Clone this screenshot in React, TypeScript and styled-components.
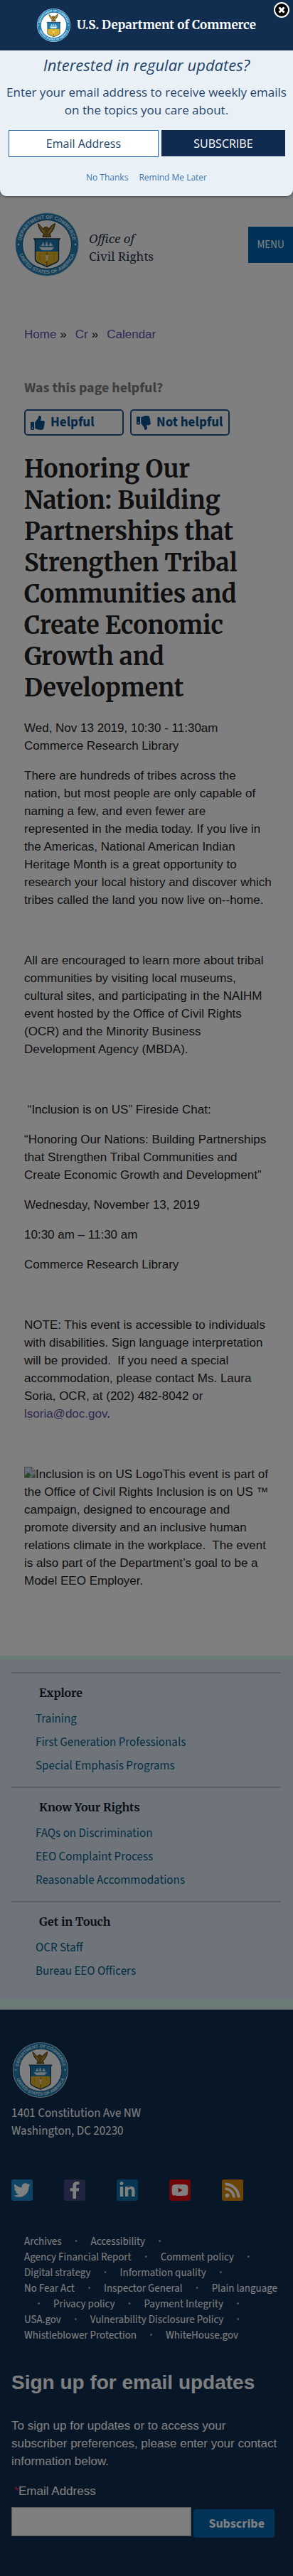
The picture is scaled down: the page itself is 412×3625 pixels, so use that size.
import React from "react";
import styled, { createGlobalStyle } from "styled-components";
import {
  FaFacebookF,
  FaLinkedinIn,
  FaRss,
  FaThumbsDown,
  FaThumbsUp,
  FaTwitter,
  FaYoutube,
} from "react-icons/fa";

const serif = `Merriweather, "Noto Serif", "DejaVu Serif Condensed", serif`;
const officeSerif = `"Noto Serif", "DejaVu Serif Condensed", serif`;
const sourceSans = `"Source Sans 3", "Noto Sans", sans-serif`;
const openSans = `"Open Sans", "Noto Sans", sans-serif`;
const body = `"Liberation Sans", Arial, sans-serif`;
const navy = "#112e51";

const GlobalStyle = createGlobalStyle`
  *, *::before, *::after { box-sizing: border-box; }
  body { margin: 0; background: #fff; }
  h1, h2, h3, p, ul, address { margin: 0; padding: 0; }
  ul { list-style: none; }
  a { text-decoration: none; }
`;

const Page = styled.div`
  position: relative;
  font-family: ${body};
  font-size: 17px;
  line-height: 25px;
  color: #212121;
`;

/* ---------- seal ---------- */

const SealSvg = styled.svg<{ $size: number }>`
  display: block;
  flex: none;
  width: ${(p) => p.$size}px;
  height: ${(p) => p.$size}px;
`;

const Seal = ({ size, id }: { size: number; id: string }) => (
  <SealSvg $size={size} viewBox="0 0 90 90" role="img" aria-label="Department of Commerce seal">
    <defs>
      <path id={`${id}-top`} d="M8.5 45a36.5 36.5 0 0 1 73 0" />
      <path id={`${id}-bottom`} d="M3.8 45a41.2 41.2 0 0 0 82.4 0" />
    </defs>
    <circle cx="45" cy="45" r="45" fill="#d7e7f2" />
    <circle cx="45" cy="45" r="44" fill="#2480b4" />
    <circle cx="45" cy="45" r="34.5" fill="#fff" stroke="#174f7c" strokeWidth="1" />
    <g fill="#d5efff" fontFamily={body} fontWeight="700" fontSize="7">
      <text textAnchor="middle">
        <textPath href={`#${id}-top`} startOffset="50%">DEPARTMENT OF COMMERCE</textPath>
      </text>
      <text textAnchor="middle">
        <textPath href={`#${id}-bottom`} startOffset="50%">UNITED STATES OF AMERICA</textPath>
      </text>
    </g>
    <circle cx="5" cy="45" r="1.2" fill="#fff" />
    <circle cx="85" cy="45" r="1.2" fill="#fff" />
    <path
      d="M32 15.5c3 2 5.500 4.500 7.500 8 1-2.500 2.500-3.500 5-3 2 .3 3 1.500 3.500 3 1.500-3.500 4-6 8.500-8-1 6-3 11-7.500 14.500l1.500 4.500H39l1.500-4.500C36 27 33.500 22 32 15.500z"
      fill="#8c6a24"
      stroke="#46340f"
      strokeWidth="1"
    />
    <path d="M35 19l6.500 9M54 19l-6.500 9M37.500 24l5 6M51.500 24l-5 6" stroke="#d8b556" strokeWidth="1" />
    <path d="M27 37h36l-1.500 3V66c0 5-9 6-16.500 10.500C37.500 72 28.500 71 28.500 66V40z" fill="#e0b52c" />
    <path d="M27 37h36l-1.500 3v15h-33V40z" fill="#1f7bb0" />
    <path d="M27 37h36l-1.500 3V66c0 5-9 6-16.500 10.500C37.500 72 28.500 71 28.500 66V40z" fill="none" stroke="#173a5c" strokeWidth="1.500" />
    <path d="M34 49h21l-3.500 4H38zM37 47l3-5 1 5M42.500 47l2-6 2 6M48 47l2-5 3 5" fill="#e4f1f8" stroke="#b7d5e6" strokeWidth=".7" />
    <path d="M45 56v19" stroke="#9a6f12" strokeWidth="1.500" />
    <path d="M35 57v11M55 57v11" stroke="#c4951b" strokeWidth="1" />
    <path d="M43 60h4l-1 8h-2z" fill="#efe3b4" />
  </SealSvg>
);

/* ---------- site header ---------- */

const SiteHeader = styled.header`
  display: flex;
  align-items: center;
  padding: 299px 0 0 21px;
`;

const OfficeName = styled.a`
  flex: 1;
  margin-left: 14px;
  padding-top: 8px;
  font-family: ${officeSerif};
  font-size: 17px;
  line-height: 25px;
  color: #27304a;

  em,
  span {
    display: block;
  }
`;

const MenuButton = styled.button`
  width: 63px;
  height: 51px;
  padding: 0;
  border: 0;
  background: #0062ae;
  color: #fff;
  font-family: ${sourceSans};
  font-size: 15px;
`;

/* ---------- article ---------- */

const Main = styled.main`
  padding: 69px 29px 93px 34px;
`;

const Crumbs = styled.nav`
  display: flex;
  gap: 12px;

  span {
    display: flex;
    gap: 5px;
  }
`;

const TextLink = styled.a`
  color: #6650a8;
`;

const Question = styled.p`
  margin-top: 51px;
  font-family: ${sourceSans};
  font-size: 20px;
  font-weight: 700;
  line-height: 24px;
  color: #7c7c7c;
`;

const Votes = styled.div`
  display: flex;
  gap: 9px;
  margin-top: 18px;
`;

const VoteButton = styled.button`
  display: flex;
  align-items: center;
  gap: 8px;
  min-width: 140px;
  height: 37px;
  padding: 0 8px 0 7px;
  border: 2px solid #205493;
  border-radius: 5px;
  background: transparent;
  color: #08508c;
  font-family: ${sourceSans};
  font-size: 19px;
  font-weight: 700;
  line-height: 24px;

  svg {
    width: 20px;
    height: 20px;
  }
`;

const Title = styled.h1`
  margin: 25px 0 22px;
  font-family: ${serif};
  font-size: 34px;
  font-weight: 700;
  line-height: 44px;
`;

const Group = styled.div`
  display: flex;
  flex-direction: column;
  gap: 17px;

  & + & {
    margin-top: 60px;
  }

  &:first-of-type {
    margin-top: 17px;
  }
`;

const BrokenImage = styled.svg`
  width: 16px;
  height: 16px;
  vertical-align: baseline;
`;

/* ---------- section navigation ---------- */

const Related = styled.aside`
  padding: 18px 17px 11px 16px;
  border-top: 5px solid #d6f6ec;
  border-bottom: 9px solid #d6f6ec;
  background: #dfe8f6;
`;

const RelatedEdge = styled.div`
  height: 5px;
  background: #dcebf2;
`;

const RelatedSection = styled.section`
  padding: 14px 0 12px 34px;
  border-top: 2px solid #b9c0cc;
`;

const RelatedHeading = styled.h3`
  margin: 0 0 8px 5px;
  font-family: ${serif};
  font-size: 16px;
  line-height: 26px;
  color: #121b2e;
`;

const RelatedLink = styled.a`
  display: block;
  font-family: ${sourceSans};
  font-size: 17px;
  line-height: 33px;
  color: #045f85;
`;

/* ---------- footer ---------- */

const Footer = styled.footer`
  padding: 46px 16px 54px;
  background: ${navy};
  color: #fff;
`;

const FooterSeal = styled.div`
  padding-left: 2px;
`;

const Address = styled.address`
  margin-top: 10px;
  font-family: ${sourceSans};
  font-size: 17px;
  font-style: normal;
`;

const Social = styled.div`
  display: flex;
  gap: 44px;
  margin-top: 55px;
`;

const SocialLink = styled.a<{ $bg: string }>`
  display: flex;
  align-items: center;
  justify-content: center;
  width: 30px;
  height: 30px;
  border-radius: 3px;
  background: ${(p) => p.$bg};
  color: #fff;

  svg {
    width: 24px;
    height: 24px;
  }
`;

const FooterLinks = styled.div`
  display: flex;
  flex-wrap: wrap;
  margin: 47px 2px 0 18px;
  font-family: ${sourceSans};
  font-size: 15px;
  line-height: 22px;
  white-space: nowrap;

  a {
    color: #fff;
  }
`;

const Dot = styled.span`
  width: 41px;
  text-align: center;
  color: #a5b4c8;
  font-weight: 700;

  &::before {
    content: "·";
  }
`;

const SignupHeading = styled.h2`
  margin: 37px 0 30px;
  font-size: 28px;
  line-height: 36px;
`;

const SignupLabel = styled.label`
  display: block;
  margin-top: 17px;
`;

const Star = styled.span`
  display: inline-block;
  width: 10px;
  color: #e0205c;
  text-align: right;
`;

const SignupRow = styled.div`
  display: flex;
  gap: 3px;
  margin-top: 10px;
  padding-right: 10px;
`;

const SignupInput = styled.input`
  flex: 1;
  min-width: 0;
  height: 41px;
  padding: 0 10px;
  border: 1px solid #aeb0b5;
  background: #fff;
  font-size: 17px;
`;

const SignupButton = styled.button`
  height: 40px;
  margin-top: 3px;
  padding: 0 14px 0 21px;
  border: 0;
  border-radius: 3px;
  background: #0066ad;
  color: #fff;
  font-family: ${sourceSans};
  font-size: 18px;
  font-weight: 700;
`;

/* ---------- subscription dialog ---------- */

const Overlay = styled.div`
  position: absolute;
  inset: 0;
  background: rgba(0, 0, 0, 0.5);
`;

const Dialog = styled.div`
  overflow: hidden;
  padding-bottom: 14px;
  border-radius: 0 0 9px 9px;
  background: #e9f1f7;
  box-shadow: 0 0 5px rgba(0, 0, 0, 0.6);
  font-family: ${openSans};
  text-align: center;
  color: #1f4469;
`;

const DialogBanner = styled.div`
  display: flex;
  align-items: center;
  justify-content: center;
  gap: 9px;
  height: 71px;
  background: ${navy};
  color: #fff;
  font-family: ${serif};
  font-size: 17px;
  font-weight: 700;
`;

const DialogTitle = styled.h2`
  padding-top: 4px;
  font-size: 22px;
  font-style: italic;
  font-weight: 400;
  line-height: 32px;
`;

const DialogText = styled.p`
  margin: 10px 4px 0;
`;

const DialogForm = styled.form`
  display: flex;
  gap: 4px;
  margin: 16px 11px 0 12px;
`;

const DialogInput = styled.input`
  flex: 6;
  min-width: 0;
  height: 38px;
  padding: 0;
  border: 1px solid #2e6da4;
  background: #fff;
  font-family: ${openSans};
  font-size: 16px;
  text-align: center;

  &::placeholder {
    color: #1f4469;
    opacity: 1;
  }
`;

const DialogSubmit = styled.button`
  flex: 5;
  height: 37px;
  padding: 0;
  border: 0;
  background: #112a50;
  color: #fff;
  font-family: ${openSans};
  font-size: 16px;
`;

const DialogActions = styled.div`
  display: flex;
  justify-content: center;
  gap: 15px;
  margin-top: 16px;
  font-size: 12px;

  a {
    color: #3b77ae;
  }
`;

const CloseButton = styled.button`
  position: absolute;
  top: 3px;
  right: 5px;
  width: 22px;
  height: 22px;
  padding: 0;
  border: 0;
  background: transparent;

  svg {
    display: block;
  }
`;

const related = [
  {
    title: "Explore",
    links: ["Training", "First Generation Professionals", "Special Emphasis Programs"],
  },
  {
    title: "Know Your Rights",
    links: ["FAQs on Discrimination", "EEO Complaint Process", "Reasonable Accommodations"],
  },
  { title: "Get in Touch", links: ["OCR Staff", "Bureau EEO Officers"] },
];

const social = [
  { name: "Twitter", bg: "#1b87c9", Icon: FaTwitter },
  { name: "Facebook", bg: "#44497f", Icon: FaFacebookF },
  { name: "LinkedIn", bg: "#0b6fa4", Icon: FaLinkedinIn },
  { name: "YouTube", bg: "#dd0a10", Icon: FaYoutube },
  { name: "RSS", bg: "#d98a0c", Icon: FaRss },
];

const footerLinks = [
  "Archives",
  "Accessibility",
  "Agency Financial Report",
  "Comment policy",
  "Digital strategy",
  "Information quality",
  "No Fear Act",
  "Inspector General",
  "Plain language",
  "Privacy policy",
  "Payment Integrity",
  "USA.gov",
  "Vulnerability Disclosure Policy",
  "Whistleblower Protection",
  "WhiteHouse.gov",
];

export default function App() {
  return (
    <Page>
      <GlobalStyle />

      <SiteHeader>
        <Seal size={90} id="header-seal" />
        <OfficeName href="#">
          <em>Office of</em>
          <span>Civil Rights</span>
        </OfficeName>
        <MenuButton>MENU</MenuButton>
      </SiteHeader>

      <Main>
        <Crumbs aria-label="Breadcrumb">
          <span>
            <TextLink href="#">Home</TextLink>»
          </span>
          <span>
            <TextLink href="#">Cr</TextLink>»
          </span>
          <TextLink href="#">Calendar</TextLink>
        </Crumbs>

        <Question>Was this page helpful?</Question>
        <Votes>
          <VoteButton>
            <FaThumbsUp />
            Helpful
          </VoteButton>
          <VoteButton>
            <FaThumbsDown />
            Not helpful
          </VoteButton>
        </Votes>

        <Title>
          Honoring Our Nation: Building Partnerships that Strengthen Tribal Communities and Create
          Economic Growth and Development
        </Title>

        <p>
          Wed, Nov 13 2019, 10:30 - 11:30am
          <br />
          Commerce Research Library
        </p>

        <article>
          <Group>
            <p>
              There are hundreds of tribes across the nation, but most people are only capable of
              naming a few, and even fewer are represented in the media today. If you live in the
              Americas, National American Indian Heritage Month is a great opportunity to research
              your local history and discover which tribes called the land you now live on--home.
            </p>
          </Group>
          <Group>
            <p>
              All are encouraged to learn more about tribal communities by visiting local museums,
              cultural sites, and participating in the NAIHM event hosted by the Office of Civil
              Rights (OCR) and the Minority Business Development Agency (MBDA).
            </p>
          </Group>
          <Group>
            <p>{"\u00a0"}“Inclusion is on US” Fireside Chat:</p>
            <p>
              “Honoring Our Nations: Building Partnerships that Strengthen Tribal Communities and
              Create Economic Growth and Development”
            </p>
            <p>Wednesday, November 13, 2019</p>
            <p>10:30 am – 11:30 am</p>
            <p>Commerce Research Library</p>
          </Group>
          <Group>
            <p>
              NOTE: This event is accessible to individuals with disabilities. Sign language
              interpretation will be provided.{"\u00a0 "}If you need a special accommodation, please
              contact Ms. Laura Soria, OCR, at (202) 482-8042 or{" "}
              <TextLink href="mailto:lsoria@doc.gov">lsoria@doc.gov</TextLink>.
            </p>
          </Group>
          <Group>
            <p>
              <BrokenImage viewBox="0 0 16 16" aria-hidden="true">
                <path d="M.5.500h10l5 5v3l-7 7H.500z" fill="#c3d4f2" stroke="#9a9a9a" />
                <path d="M10.500.500v5h5z" fill="#fff" stroke="#9a9a9a" />
                <path d="M3 5.500a2 2 0 0 1 4 0z" fill="#fff" />
                <path d="M1 15v-2.500l5-4.500 4 3.500L6.500 15z" fill="#4a9a4a" />
                <path d="M15.500 10v5.500h-5.500z" fill="#4a9a4a" stroke="#9a9a9a" />
              </BrokenImage>
              Inclusion is on US LogoThis event is part of the Office of Civil Rights Inclusion is on
              US ™ campaign, designed to encourage and promote diversity and an inclusive human
              relations climate in the workplace.{"\u00a0 "}The event is also part of the
              Department’s goal to be a Model EEO Employer.
            </p>
          </Group>
        </article>
      </Main>

      <Related>
        {related.map((section) => (
          <RelatedSection key={section.title}>
            <RelatedHeading>{section.title}</RelatedHeading>
            {section.links.map((link) => (
              <RelatedLink href="#" key={link}>
                {link}
              </RelatedLink>
            ))}
          </RelatedSection>
        ))}
      </Related>
      <RelatedEdge />

      <Footer>
        <FooterSeal>
          <Seal size={78} id="footer-seal" />
        </FooterSeal>
        <Address>
          1401 Constitution Ave NW
          <br />
          Washington, DC 20230
        </Address>
        <Social>
          {social.map(({ name, bg, Icon }) => (
            <SocialLink href="#" key={name} $bg={bg} aria-label={name}>
              <Icon />
            </SocialLink>
          ))}
        </Social>
        <FooterLinks>
          {footerLinks.map((link, i) => (
            <React.Fragment key={link}>
              {i > 0 && <Dot />}
              <a href="#">{link}</a>
            </React.Fragment>
          ))}
        </FooterLinks>

        <SignupHeading>Sign up for email updates</SignupHeading>
        <p>
          To sign up for updates or to access your subscriber preferences, please enter your contact
          information below.
        </p>
        <SignupLabel htmlFor="signup-email">
          <Star>*</Star>Email Address
        </SignupLabel>
        <SignupRow>
          <SignupInput id="signup-email" type="email" />
          <SignupButton>Subscribe</SignupButton>
        </SignupRow>
      </Footer>

      <Overlay>
        <Dialog role="dialog" aria-labelledby="dialog-title">
          <DialogBanner>
            <Seal size={47} id="dialog-seal" />
            U.S. Department of Commerce
          </DialogBanner>
          <DialogTitle id="dialog-title">Interested in regular updates?</DialogTitle>
          <DialogText>
            Enter your email address to receive weekly emails on the topics you care about.
          </DialogText>
          <DialogForm>
            <DialogInput type="email" aria-label="Email Address" placeholder="Email Address" />
            <DialogSubmit type="button">SUBSCRIBE</DialogSubmit>
          </DialogForm>
          <DialogActions>
            <a href="#">No Thanks</a>
            <a href="#">Remind Me Later</a>
          </DialogActions>
        </Dialog>
        <CloseButton aria-label="Close">
          <svg width="22" height="22" viewBox="0 0 22 22">
            <circle cx="11" cy="11" r="10" fill="#000" stroke="#fff" strokeWidth="2" />
            <path d="M7.500 7.500l7 7M14.500 7.500l-7 7" stroke="#fff" strokeWidth="3" />
          </svg>
        </CloseButton>
      </Overlay>
    </Page>
  );
}
